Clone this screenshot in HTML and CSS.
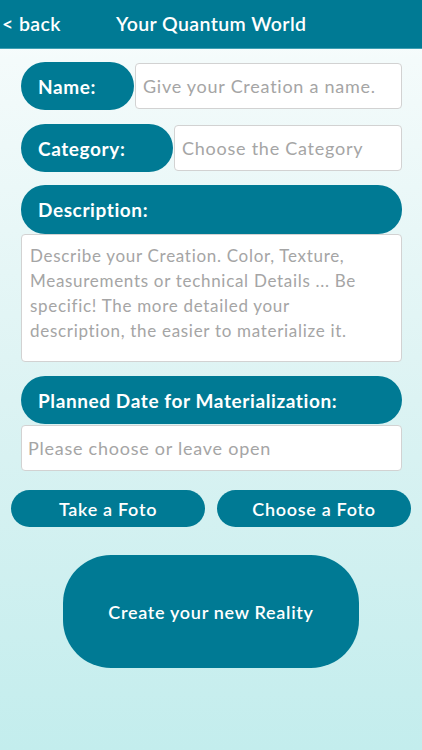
FILE: index.html
```html
<!DOCTYPE html>
<html lang="en">
<head>
<meta charset="utf-8">
<title>Your Quantum World</title>
<link rel="stylesheet" href="styles.css">
</head>
<body>
<header class="topbar">
  <span class="back">&lt; back</span>
  <span class="title">Your Quantum World</span>
</header>
<main class="form">
  <div class="row row-name">
    <div class="pill pill-name">Name:</div>
    <div class="field">Give your Creation a name.</div>
  </div>
  <div class="row row-cat">
    <div class="pill pill-cat">Category:</div>
    <div class="field">Choose the Category</div>
  </div>
  <div class="block block-desc">
    <div class="pill pill-wide">Description:</div>
    <div class="area">Describe your Creation. Color, Texture, Measurements or technical Details ... Be specific! The more detailed your description, the easier to materialize it.</div>
  </div>
  <div class="block block-date">
    <div class="pill pill-wide">Planned Date for Materialization:</div>
    <div class="field field-date">Please choose or leave open</div>
  </div>
</main>
<div class="foto-row">
  <button class="btn">Take a Foto</button>
  <button class="btn">Choose a Foto</button>
</div>
<div class="create-wrap">
  <button class="create">Create your new Reality</button>
</div>
</body>
</html>
```
FILE: styles.css
```css
* { box-sizing: border-box; }
html, body { height: 100%; }
body {
  margin: 0;
  width: 422px;
  min-height: 750px;
  font-family: "Lato", "Open Sans", sans-serif;
  background: linear-gradient(to bottom, #ffffff 0px, #f4fbfb 60px, #dcf3f3 400px, #c3eded 750px);
}
.topbar {
  height: 49px;
  background: #007a94;
  border-bottom: 1px solid #3f9fb3;
  display: flex;
  align-items: center;
  color: #fff;
  padding-bottom: 1px;
}
.back {
  font-size: 19.5px;
  font-weight: 600;
  letter-spacing: 0.4px;
  padding-left: 2px;
  width: 116px;
}
.title {
  font-size: 19.5px;
  font-weight: 600;
  letter-spacing: 0.4px;
}
.form {
  padding: 13px 20px 0 21px;
  display: flex;
  flex-direction: column;
}
.row {
  display: flex;
  align-items: center;
  gap: 1px;
}
.row-cat { margin-top: 14px; }
.pill {
  height: 48px;
  background: #007a94;
  color: #fff;
  border-radius: 24px;
  display: flex;
  align-items: center;
  padding-left: 17px;
  font-size: 19px;
  font-weight: 700;
  letter-spacing: 0.6px;
  flex: none;
  white-space: nowrap;
}
.pill-name { width: 113px; }
.pill-cat { width: 152px; }
.pill-wide { width: 100%; }
.field {
  flex: 1;
  height: 46px;
  background: #fff;
  border: 1px solid #d2d2d2;
  border-radius: 4px;
  color: #a5a5a5;
  font-size: 18px;
  letter-spacing: 0.75px;
  display: flex;
  align-items: center;
  padding-left: 7px;
  white-space: nowrap;
  overflow: hidden;
}
.block { display: flex; flex-direction: column; }
.block-desc { margin-top: 13px; }
.block-desc .pill { height: 49px; }
.area {
  height: 128px;
  background: #fff;
  border: 1px solid #d2d2d2;
  border-radius: 4px;
  color: #a5a5a5;
  font-size: 17px;
  letter-spacing: 0.7px;
  line-height: 25px;
  padding: 8px 31px 0 8px;
}
.block-date { margin-top: 14px; }
.field-date { flex: none; padding-left: 6px; margin-top: 1px; }
.foto-row {
  display: flex;
  gap: 12px;
  padding: 19px 11px 0 11px;
}
.btn {
  flex: 1;
  height: 37px;
  border: none;
  border-radius: 19px;
  background: #007a94;
  color: #fff;
  font-family: inherit;
  font-size: 18px;
  font-weight: 600;
  letter-spacing: 0.7px;
}
.create-wrap {
  display: flex;
  padding: 28px 0 0 63px;
}
.create {
  width: 296px;
  height: 113px;
  border: none;
  border-radius: 48px;
  background: #007a94;
  color: #fff;
  font-family: inherit;
  font-size: 18px;
  font-weight: 600;
  letter-spacing: 0.7px;
}
```
